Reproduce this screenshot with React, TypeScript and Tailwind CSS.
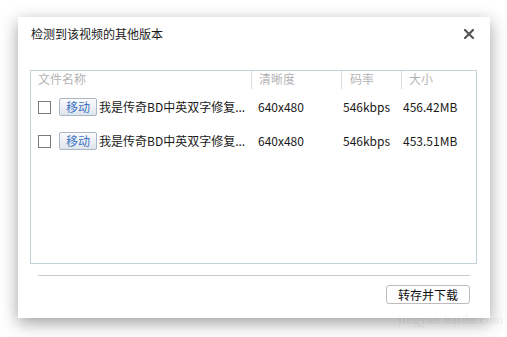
import React from "react";

const font = { fontFamily: '"Noto Sans CJK SC", "Noto Sans", sans-serif' };

function Row({ size }: { size: string }) {
  return (
    <div className="grid grid-cols-[220px_90px_60px_1fr] h-[34px] items-center text-[12px] leading-[14px] text-[#1a1a1a]">
      <div className="flex items-center">
        <div className="ml-[7px] w-[13px] h-[13px] border border-[#7a7a7a] bg-white" />
        <div className="ml-[8px] w-[38px] h-[18px] border border-[#a9b6c6] rounded-[2px] bg-gradient-to-b from-[#fbfcfd] to-[#dfe5ec] flex items-center justify-center text-[#3b72c4]">
          移动
        </div>
        <div className="ml-[2px] whitespace-nowrap">我是传奇BD中英双字修复...</div>
      </div>
      <div className="pl-[7px]">640x480</div>
      <div className="pl-[2px]">546kbps</div>
      <div className="pl-[2px]">{size}</div>
    </div>
  );
}

export default function App() {
  return (
    <div className="w-[507px] h-[337px] bg-white pt-[17px] pl-[18px] overflow-hidden relative" style={font}>
      <div className="w-[472px] h-[301px] bg-white shadow-[0_5px_16px_rgba(0,0,0,0.38)] flex flex-col">
        <div className="flex items-center justify-between h-[34px] pl-[13px] pr-[16px] pt-[0px]">
          <div className="text-[12px] leading-[14px] text-[#1a1a1a]">检测到该视频的其他版本</div>
          <svg width="10" height="10" viewBox="0 0 10 10" className="mt-[0px]">
            <path d="M1 1 L9 9 M9 1 L1 9" stroke="#555" strokeWidth="2.2" strokeLinecap="square" />
          </svg>
        </div>
        <div className="ml-[12px] mt-[19px] w-[447px] h-[194px] border border-[#c4d2d8]">
          <div className="grid grid-cols-[220px_90px_60px_1fr] h-[18px] text-[12px] leading-[14px] text-[#b4b4b4]">
            <div className="pl-[7px] pt-[1px]">文件名称</div>
            <div className="pl-[7px] pt-[1px] border-l border-[#d5dde2]">清晰度</div>
            <div className="pl-[8px] pt-[1px] border-l border-[#d5dde2]">码率</div>
            <div className="pl-[7px] pt-[1px] border-l border-[#d5dde2]">大小</div>
          </div>
          <div className="mt-[1px]">
            <Row size="456.42MB" />
            <Row size="453.51MB" />
          </div>
        </div>
        <div className="ml-[20px] mt-[11px] w-[432px] h-px bg-[#cccccc]" />
        <div className="flex justify-end pr-[20px] mt-[9px]">
          <div className="w-[84px] h-[19px] border border-[#bdbdbd] rounded-[3px] bg-white flex items-center justify-center text-[12px] leading-[14px] text-[#111]">
            转存并下载
          </div>
        </div>
      </div>
      <div className="absolute left-[398px] top-[313px] text-[13px] leading-[14px] text-[#000] opacity-[0.06] tracking-[0.5px]" style={{ fontFamily: '"Liberation Serif", serif' }}>
        jingyan.baidu.com
      </div>
    </div>
  );
}
